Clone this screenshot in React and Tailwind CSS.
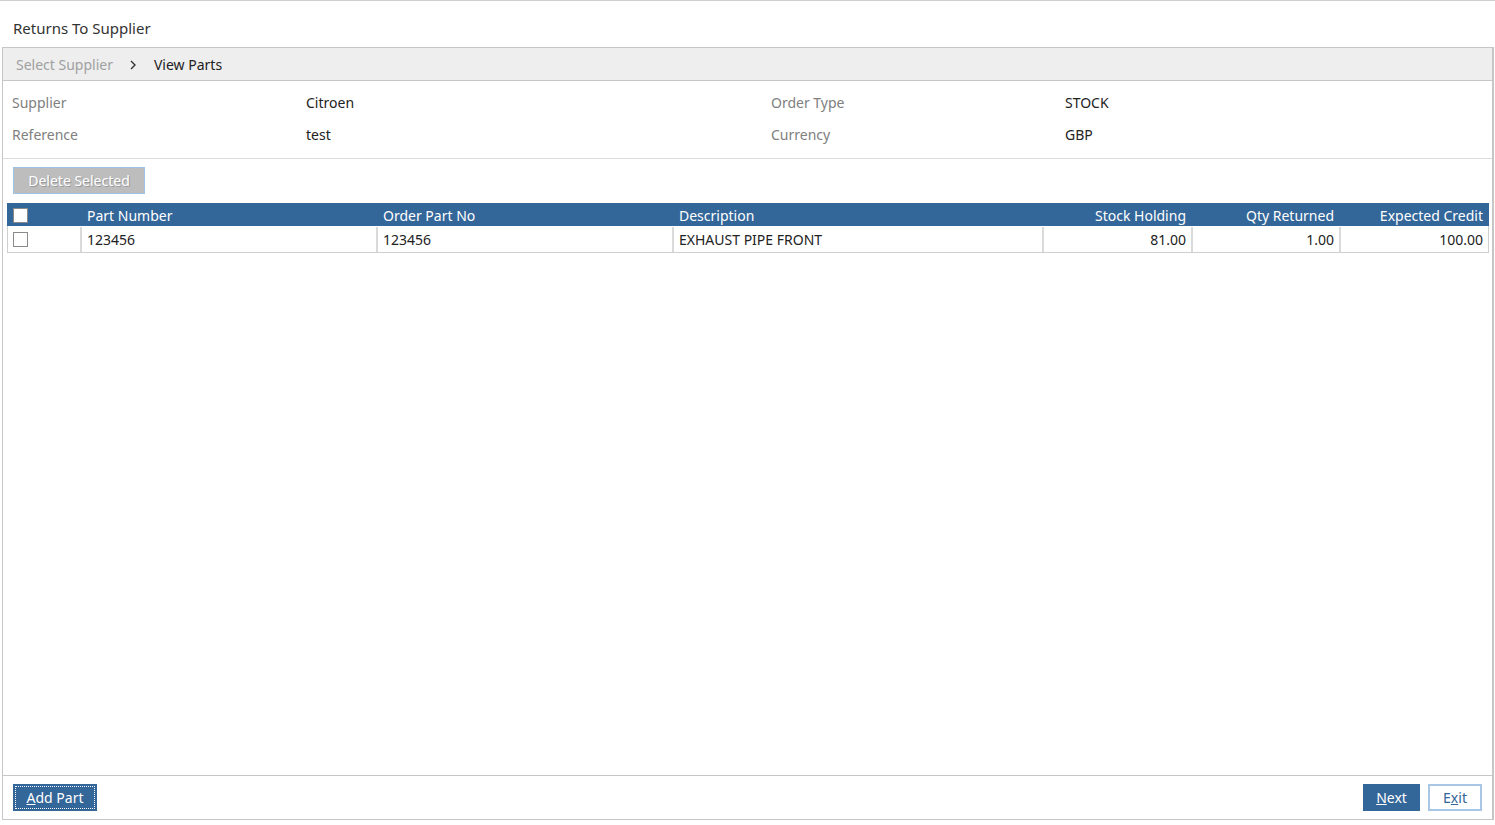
import React from "react";

const font = { fontFamily: '"Noto Sans", "Open Sans", sans-serif' };

function Box() {
  return <span className="inline-block w-[15px] h-[15px] bg-white border border-[#8a8a8a]" />;
}

export default function App() {
  const cols = [
    { w: "w-[74px]", rw: "w-[72px]" },
    { w: "w-[296px]", rw: "w-[296px]", label: "Part Number", val: "123456" },
    { w: "w-[296px]", rw: "w-[296px]", label: "Order Part No", val: "123456" },
    { w: "w-[370px]", rw: "w-[370px]", label: "Description", val: "EXHAUST PIPE FRONT" },
    { w: "w-[149px]", rw: "w-[149px]", label: "Stock Holding", val: "81.00", right: true },
    { w: "w-[148px]", rw: "w-[148px]", label: "Qty Returned", val: "1.00", right: true },
    { w: "flex-1", rw: "flex-1", label: "Expected Credit", val: "100.00", right: true },
  ];
  return (
    <div style={font} className="w-[1495px] h-[825px] bg-white border-t border-[#cfcfcf] flex flex-col text-[14px] text-[#222]">
      <div className="h-[46px] flex items-center pl-[13px] pt-[8px] text-[15px] text-[#333]">Returns To Supplier</div>
      <div className="ml-[2px] mr-[1px] h-[773px] border border-[#c6c6c6] border-r-2 flex flex-col">
        <div className="h-[33px] shrink-0 bg-[#eeeeee] border-b border-[#c6c6c6] flex items-center pl-[13px] pt-[1px]">
          <span className="text-[#a0a0a0]">Select Supplier</span>
          <span className="ml-[16px] mr-[17px] text-[#333]">
            <svg width="8" height="10" viewBox="0 0 8 10"><path d="M2 1 L6 5 L2 9" fill="none" stroke="#333" strokeWidth="1.4" /></svg>
          </span>
          <span className="text-[#222]">View Parts</span>
        </div>
        <div className="h-[78px] shrink-0 border-b border-[#dcdcdc] pl-[9px] pt-[5px] grid grid-cols-[294px_465px_294px_1fr] auto-rows-[32px] items-center">
          <span className="text-[#808080]">Supplier</span>
          <span>Citroen</span>
          <span className="text-[#808080]">Order Type</span>
          <span>STOCK</span>
          <span className="text-[#808080]">Reference</span>
          <span>test</span>
          <span className="text-[#808080]">Currency</span>
          <span>GBP</span>
        </div>
        <div className="pl-[10px] pt-[8px]">
          <button className="w-[132px] h-[27px] bg-[#bdbdbd] border border-[#9ec3e6] text-white text-[14px] [text-shadow:1px_1px_0_#999]">Delete Selected</button>
        </div>
        <div className="ml-[4px] mt-[9px] w-[1482px]">
          <div className="h-[23px] bg-[#336699] flex items-center text-white pt-[1px]">
            {cols.map((c, i) => (
              <div key={i} className={`${c.w} ${c.right ? "text-right pr-[6px] justify-end" : "pl-[6px]"} shrink-0 h-full flex items-center`}>
                {i === 0 ? <Box /> : c.label}
              </div>
            ))}
          </div>
          <div className="h-[27px] flex border border-t-0 border-[#cfcfcf] pt-[1px]">
            {cols.map((c, i) => (
              <div key={i} className={`${c.rw} ${i > 0 ? "border-l-2 border-[#dadada]" : ""} ${c.right ? "justify-end pr-[5px]" : "pl-[5px]"} shrink-0 h-full flex items-center`}>
                {i === 0 ? <Box /> : c.val}
              </div>
            ))}
          </div>
        </div>
        <div className="flex-1" />
        <div className="h-[44px] shrink-0 border-t border-[#c6c6c6] flex items-start pt-[8px] pl-[10px] pr-[10px]">
          <button className="h-[27px] w-[84px] bg-[#336699] text-white text-[14px] flex items-center justify-center outline-1 outline-dotted outline-white -outline-offset-[3px]">
            <span><span className="underline">A</span>dd Part</span>
          </button>
          <div className="flex-1" />
          <button className="h-[27px] w-[57px] bg-[#336699] text-white text-[14px]">
            <span className="underline">N</span>ext
          </button>
          <button className="ml-[8px] h-[27px] w-[54px] bg-white border-2 border-[#a9c6e4] text-[#336699] text-[14px]">
            E<span className="underline">x</span>it
          </button>
        </div>
      </div>
    </div>
  );
}
